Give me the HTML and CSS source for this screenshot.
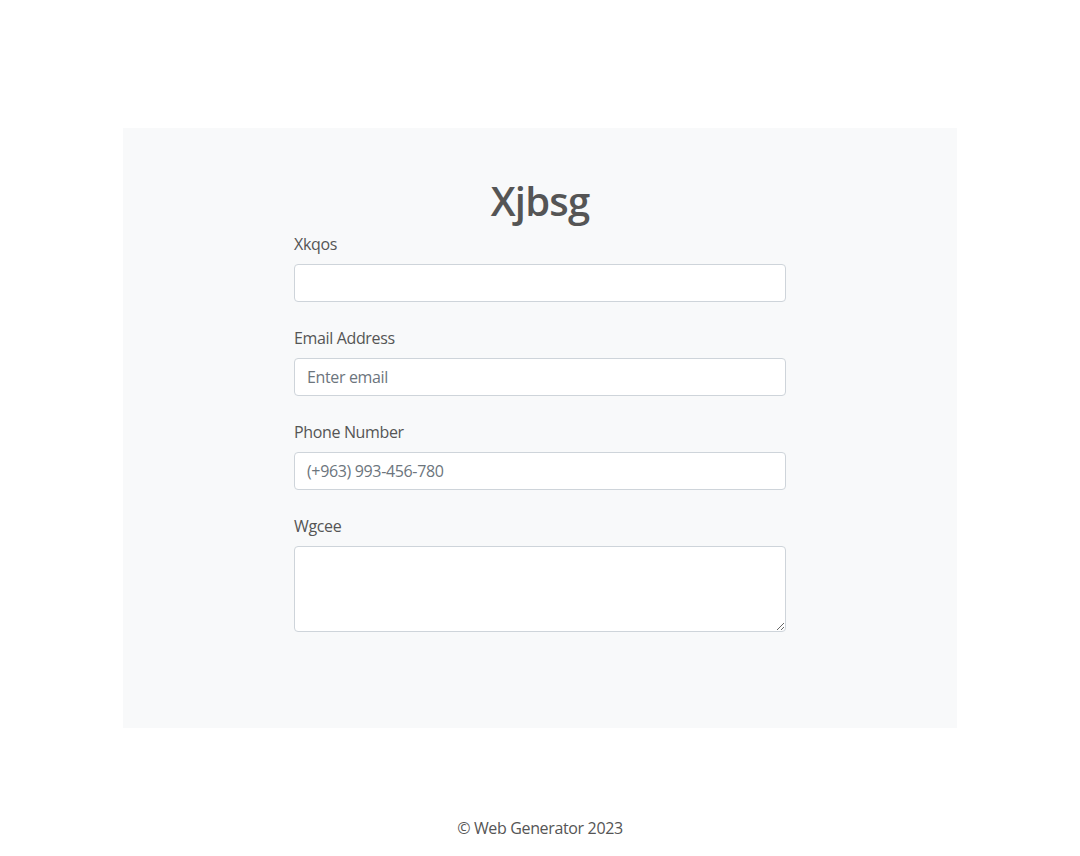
FILE: index.html
```html
<!DOCTYPE html>
<html lang="en">
<head>
<meta charset="utf-8">
<title>Xjbsg</title>
<link rel="stylesheet" href="styles.css">
</head>
<body>
<main class="page">
  <section class="panel">
    <h1 class="title">Xjbsg</h1>
    <form class="form">
      <div class="group">
        <label class="label" for="f1">Xkqos</label>
        <input class="control" id="f1" type="text">
      </div>
      <div class="group">
        <label class="label" for="f2">Email Address</label>
        <input class="control" id="f2" type="email" placeholder="Enter email">
      </div>
      <div class="group">
        <label class="label" for="f3">Phone Number</label>
        <input class="control" id="f3" type="tel" placeholder="(+963) 993-456-780">
      </div>
      <div class="group">
        <label class="label" for="f4">Wgcee</label>
        <textarea class="control area" id="f4" rows="3"></textarea>
      </div>
    </form>
  </section>
</main>
<footer class="footer">© Web Generator 2023</footer>
</body>
</html>
```
FILE: styles.css
```css
* { box-sizing: border-box; }
html, body { margin: 0; padding: 0; background: #fff; }
body {
  font-family: "Open Sans", "Noto Sans", sans-serif;
  font-size: 16px;
  line-height: 1.5;
  letter-spacing: -0.35px;
  color: #555;
}
.page { padding-top: 128px; }
.panel {
  width: 834px;
  margin: 0 auto;
  background: #f8f9fa;
  padding: 49px 0 72px;
}
.title {
  margin: 0 0 7px;
  text-align: center;
  font-size: 40px;
  line-height: 48px;
  font-weight: 600;
  letter-spacing: -0.8px;
  color: #555;
}
.form {
  width: 492px;
  margin: 0 auto;
}
.group { margin-bottom: 24px; }
.label {
  display: block;
  margin-bottom: 8px;
  line-height: 24px;
  color: #555;
}
.control {
  display: block;
  width: 100%;
  height: 38px;
  padding: 6px 12px;
  font: inherit;
  letter-spacing: inherit;
  line-height: 24px;
  color: #495057;
  background: #fff;
  border: 1px solid #ced4da;
  border-radius: 4px;
}
.control::placeholder { color: #6c757d; opacity: 1; }
.area { height: 86px; resize: vertical; }
.footer {
  margin-top: 88px;
  text-align: center;
  line-height: 24px;
  color: #555;
}
```
